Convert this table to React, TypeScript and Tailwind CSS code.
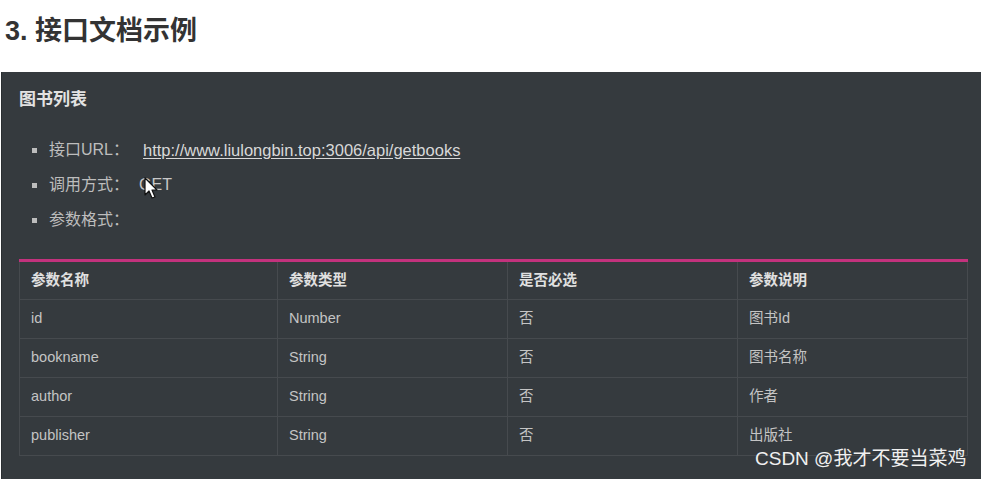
import React from 'react';

const rows = [
  { name: 'id', type: 'Number', required: '否', desc: '图书Id' },
  { name: 'bookname', type: 'String', required: '否', desc: '图书名称' },
  { name: 'author', type: 'String', required: '否', desc: '作者' },
  { name: 'publisher', type: 'String', required: '否', desc: '出版社' },
];

const cell = 'border-r border-b border-[#464a4e] px-[11px] h-[39px] align-middle';

const Cursor = () => (
  <svg width="16" height="24" viewBox="0 0 16 24" className="absolute left-[144px] top-[177px]">
    <path d="M1 1 L1 18 L5 14 L8 21 L11 20 L8 13 L13 13 Z" fill="#ffffff" stroke="#111111" strokeWidth="1.2" strokeLinejoin="round" />
  </svg>
);

export default function App() {
  return (
    <div
      className="relative w-[983px] h-[479px] bg-white overflow-hidden flex flex-col"
      style={{ fontFamily: '"Liberation Sans", "Noto Sans CJK SC", sans-serif' }}
    >
      <div className="h-[72px] pl-[5px] pt-[13px] text-[27px] font-bold text-[#333333] leading-[36px]">
        3. 接口文档示例
      </div>

      <div className="flex-1 ml-[1px] w-[980px] bg-[#353a3e] border-l border-[#2a2e31] pt-[15px] pl-[17px]">
        <h3 className="text-[17px] font-bold text-[#e2e2e2] leading-[26px]">图书列表</h3>

        <ul className="mt-[26px] pl-[13px] text-[16px] text-[#bdbdbd] flex flex-col gap-[13px]">
          <li className="flex items-center h-[22px]">
            <span className="w-[5px] h-[5px] bg-[#bdbdbd] mr-[12px]" />
            <span>接口URL：</span>
            <span className="ml-[14px] text-[16.5px] underline underline-offset-2 text-[#d8d8d8]">
              http://www.liulongbin.top:3006/api/getbooks
            </span>
          </li>
          <li className="flex items-center h-[22px]">
            <span className="w-[5px] h-[5px] bg-[#bdbdbd] mr-[12px]" />
            <span>调用方式：</span>
            <span className="ml-[10px] text-[#c8c8c8]">GET</span>
          </li>
          <li className="flex items-center h-[22px]">
            <span className="w-[5px] h-[5px] bg-[#bdbdbd] mr-[12px]" />
            <span>参数格式：</span>
          </li>
        </ul>

        <table className="mt-[28px] w-[948px] border-collapse table-fixed text-[14.5px] text-[#c4c4c4] border-t-[3px] border-t-[#c3327d] border-l border-l-[#464a4e]">
          <colgroup>
            <col className="w-[258px]" />
            <col className="w-[230px]" />
            <col className="w-[230px]" />
            <col className="w-[230px]" />
          </colgroup>
          <thead>
            <tr className="text-left text-[#e0e0e0] font-bold">
              <th className={cell}>参数名称</th>
              <th className={cell}>参数类型</th>
              <th className={cell}>是否必选</th>
              <th className={cell}>参数说明</th>
            </tr>
          </thead>
          <tbody>
            {rows.map((r) => (
              <tr key={r.name}>
                <td className={cell}>{r.name}</td>
                <td className={cell}>{r.type}</td>
                <td className={cell}>{r.required}</td>
                <td className={cell}>{r.desc}</td>
              </tr>
            ))}
          </tbody>
        </table>
      </div>

      <Cursor />

      <div className="absolute left-[755px] top-[446px] text-[19px] text-[#f0f0f0] leading-[26px]">
        CSDN @我才不要当菜鸡
      </div>
    </div>
  );
}
